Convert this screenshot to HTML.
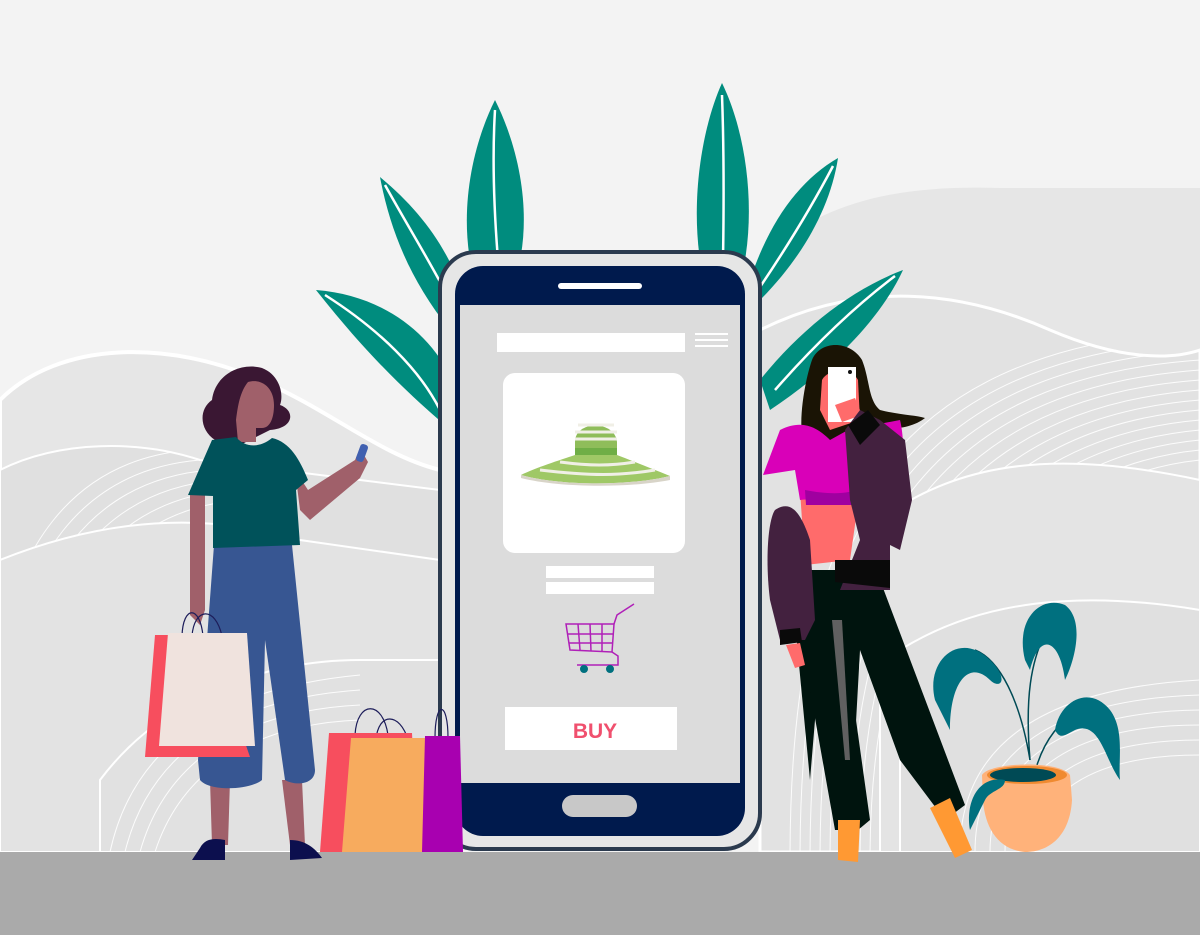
<!DOCTYPE html>
<html><head><meta charset="utf-8"><style>html,body{margin:0;padding:0;background:#f3f3f3}svg{display:block}</style></head>
<body>
<svg width="1200" height="935" viewBox="0 0 1200 935" xmlns="http://www.w3.org/2000/svg">
<defs>
<clipPath id="cr"><path d="M760 330 C860 280 960 290 1050 330 C1120 360 1170 360 1200 350 L1200 852 L760 852Z"/></clipPath>
<clipPath id="cl"><path d="M0 470 C60 440 140 440 200 460 L440 490 L440 852 L0 852Z"/></clipPath>
</defs>
<rect width="1200" height="935" fill="#f3f3f3"/>
<!-- background hills -->
<path d="M760 260 C820 200 900 185 1000 188 L1200 188 L1200 852 L760 852Z" fill="#e6e6e6"/>
<path d="M760 330 C860 280 960 290 1050 330 C1120 360 1170 360 1200 350 L1200 852 L760 852Z" fill="#e2e2e2" stroke="#fff" stroke-width="3"/>
<g clip-path="url(#cr)" fill="none" stroke="#fff" stroke-width="1" opacity="0.9">
<path d="M860 860 C860 600 950 420 1200 400"/><path d="M870 860 C870 610 960 430 1200 410"/><path d="M880 860 C880 620 970 440 1200 420"/><path d="M890 860 C890 630 980 450 1200 430"/><path d="M900 860 C900 640 990 460 1200 440"/><path d="M910 860 C910 650 1000 470 1200 450"/><path d="M920 860 C920 660 1010 480 1200 460"/><path d="M850 860 C850 590 940 410 1200 390"/><path d="M840 860 C840 580 930 400 1200 380"/><path d="M830 860 C830 570 920 390 1200 370"/><path d="M820 860 C820 560 910 380 1200 360"/><path d="M810 860 C810 550 900 370 1200 350"/><path d="M800 860 C800 540 890 360 1200 340"/><path d="M790 860 C790 530 880 350 1200 330"/>
</g>
<path d="M880 520 C960 460 1060 450 1200 480 L1200 852 L880 852Z" fill="#e4e4e4" stroke="#fff" stroke-width="2"/>
<path d="M900 650 C980 600 1080 590 1200 610 L1200 852 L900 852Z" fill="#e0e0e0" stroke="#fff" stroke-width="2"/>
<g fill="none" stroke="#fff" stroke-width="1" opacity="0.9">
<path d="M960 852 C960 760 1020 690 1200 680"/><path d="M975 852 C975 770 1030 700 1200 695"/><path d="M990 852 C990 780 1040 712 1200 710"/><path d="M1005 852 C1005 790 1050 725 1200 725"/><path d="M1020 852 C1020 800 1060 740 1200 740"/><path d="M1035 852 C1035 810 1070 755 1200 755"/>
</g>
<path d="M0 400 C60 340 170 340 260 380 C330 410 380 455 440 470 L440 852 L0 852Z" fill="#e6e6e6" stroke="#fff" stroke-width="4"/>
<path d="M0 470 C60 440 140 440 200 460 L440 490 L440 852 L0 852Z" fill="#e0e0e0" stroke="#fff" stroke-width="2"/>
<g clip-path="url(#cl)" fill="none" stroke="#fff" stroke-width="1" opacity="0.9">
<path d="M0 700 C20 560 80 470 200 460"/><path d="M10 710 C30 570 90 480 210 470"/><path d="M20 720 C40 580 100 490 220 480"/><path d="M30 730 C50 590 110 500 230 490"/><path d="M-10 690 C10 550 70 460 190 450"/><path d="M40 740 C60 600 120 510 240 500"/>
</g>
<path d="M0 560 C100 520 200 510 300 540 L440 560 L440 852 L0 852Z" fill="#e3e3e3" stroke="#fff" stroke-width="2"/>
<path d="M100 780 C160 700 260 660 360 660 L440 660 L440 852 L100 852Z" fill="#e1e1e1" stroke="#fff" stroke-width="2"/>
<g fill="none" stroke="#fff" stroke-width="1" opacity="0.9">
<path d="M110 852 C130 760 200 690 360 675"/><path d="M125 852 C145 770 210 700 360 690"/><path d="M140 852 C160 780 220 712 360 705"/><path d="M155 852 C175 790 230 725 360 720"/>
</g>
<rect x="0" y="852" width="1200" height="83" fill="#aaaaaa"/>
<!-- leaves -->
<g fill="#008c7e">
<path d="M445 425 C380 370 340 320 316 290 C380 295 430 330 455 385Z"/>
<path d="M450 330 C410 280 390 230 380 177 C420 210 450 250 465 300Z"/>
<path d="M470 260 C460 200 475 140 495 100 C520 150 530 210 520 260Z"/>
<path d="M700 260 C690 190 705 120 722 83 C745 130 755 200 745 260Z"/>
<path d="M750 280 C770 220 800 180 838 158 C830 210 800 260 760 300Z"/>
<path d="M760 380 C800 330 850 290 903 270 C880 320 830 370 770 410Z"/>
</g>
<g stroke="#fff" stroke-width="2.5" fill="none">
<path d="M325 295 C380 330 420 370 440 410"/><path d="M385 185 C410 230 435 270 455 310"/><path d="M495 110 C492 160 494 210 498 260"/>
<path d="M722 95 C724 150 724 200 723 260"/><path d="M833 166 C810 210 785 250 758 290"/><path d="M895 276 C850 310 810 350 775 390"/>
</g>
<!-- phone -->
<rect x="440" y="252" width="320" height="597" rx="36" fill="#e6e6e6" stroke="#2b3a4e" stroke-width="4"/>
<rect x="455" y="266" width="290" height="570" rx="28" fill="#001a4d"/>
<rect x="460" y="305" width="280" height="478" fill="#dcdcdc"/>
<rect x="558" y="283" width="84" height="6" rx="3" fill="#fff"/>
<rect x="562" y="795" width="75" height="22" rx="11" fill="#c8c8c8"/>
<rect x="497" y="333" width="188" height="19" fill="#fff"/>
<g fill="#fff"><rect x="695" y="333" width="33" height="2"/><rect x="695" y="339" width="33" height="2"/><rect x="695" y="345" width="33" height="2"/></g>
<rect x="503" y="373" width="182" height="180" rx="12" fill="#fff"/>
<!-- hat -->
<path d="M575 442 C575 420 615 420 617 442 L617 458 L575 458Z" fill="#8fbd5a"/>
<g stroke="#f0efe6" stroke-width="3"><line x1="578" y1="425" x2="614" y2="425"/><line x1="575" y1="432" x2="617" y2="432"/><line x1="575" y1="439" x2="617" y2="439"/></g>
<path d="M575 448 L617 448 L617 458 L575 458Z" fill="#6fae46"/>
<path d="M575 455 C560 460 535 468 521 475 C560 486 630 486 670 476 C650 468 630 460 617 455Z" fill="#9fc866"/>
<g stroke="#f0efe6" stroke-width="3" fill="none"><path d="M560 462 C590 466 610 466 635 462"/><path d="M540 470 C590 476 620 476 655 470"/></g>
<path d="M521 475 C560 486 630 486 670 476 L670 480 C630 488 560 488 521 478Z" fill="#d8d4c8"/>
<rect x="546" y="566" width="108" height="12" fill="#fff"/>
<rect x="546" y="582" width="108" height="12" fill="#fff"/>
<!-- cart -->
<g stroke="#b020b8" stroke-width="1.5" fill="none">
<path d="M566 624 L614 624 L612 652 L570 650Z"/>
<path d="M614 624 L617 615 L634 604"/>
<path d="M568 634 L613 634 M569 643 L612 643 M578 624 L580 650 M590 624 L591 651 M602 624 L602 652"/>
<path d="M612 652 L618 656 L618 665 L577 665"/>
</g>
<circle cx="584" cy="669" r="4" fill="#00707f"/><circle cx="610" cy="669" r="4" fill="#00707f"/>
<rect x="505" y="707" width="172" height="43" fill="#fff"/>
<text x="595" y="738" text-anchor="middle" font-family="Liberation Sans, sans-serif" font-size="21" font-weight="bold" fill="#f0506e">BUY</text>
<!-- floor bags -->
<g fill="none" stroke="#1d1d5a" stroke-width="1.2"><path d="M355 735 C357 700 383 700 388 735"/><path d="M376 740 C378 712 400 712 408 740"/><path d="M435 738 C435 700 448 700 448 738"/></g>
<path d="M329 733 L412 733 L418 852 L320 852Z" fill="#f74e5e"/>
<path d="M351 738 L426 738 L424 852 L342 852Z" fill="#f7ab5e"/>
<path d="M425 736 L460 736 L463 852 L422 852Z" fill="#a800b0"/>
<!-- left woman -->
<path d="M210 780 L230 780 L228 845 L212 845Z" fill="#a0606a"/>
<path d="M282 780 L302 780 L305 845 L290 845Z" fill="#a0606a"/>
<path d="M200 848 C205 838 215 838 225 840 L225 860 L192 860Z" fill="#0c0f4e"/>
<path d="M290 840 C305 840 315 848 322 858 L290 860Z" fill="#0c0f4e"/>
<path d="M214 545 L292 545 L315 770 C315 785 295 786 285 780 L265 640 L262 780 C250 790 210 792 200 780 L198 760Z" fill="#375692"/>
<path d="M215 440 C200 430 198 410 212 400 C215 375 240 362 262 368 C280 375 284 395 280 405 C295 410 295 428 270 430 L240 445 Z" fill="#3a1733"/>
<path d="M248 382 C262 378 274 388 274 405 C274 418 270 428 262 428 L256 428 L256 442 L238 442 L236 420 C238 405 240 392 248 382Z" fill="#a0606a"/>
<path d="M190 490 L205 490 L205 610 L200 625 L190 615Z" fill="#a0606a"/>
<path d="M295 470 L308 490 L355 460 L360 448 L368 462 L360 478 L310 520 L300 510Z" fill="#a0606a"/>
<rect x="358" y="444" width="8" height="18" rx="3" fill="#4060b0" transform="rotate(20 362 453)"/>
<path d="M212 440 L236 437 C245 448 260 448 272 438 C290 442 300 460 308 480 L296 490 L300 545 L213 548 L213 496 L188 495 Z" fill="#00525a"/>
<g fill="none" stroke="#1d1d5a" stroke-width="1.2"><path d="M182 636 C183 605 200 605 203 636"/><path d="M192 636 C194 608 215 605 222 636"/></g>
<path d="M155 635 L208 635 L250 757 L145 757Z" fill="#f74e5e"/>
<path d="M168 633 L247 633 L255 746 L159 746Z" fill="#f0e3de"/>
<!-- right woman -->
<path d="M812 360 C820 340 850 340 862 360 C870 380 868 400 880 410 C900 415 915 415 925 418 C910 430 885 430 868 428 L815 445 L803 440 C798 420 805 380 812 360Z" fill="#1a1405"/>
<path d="M822 380 C828 368 852 368 858 380 L860 420 L830 430 L820 410Z" fill="#ff6b6b"/>
<rect x="828" y="367" width="28" height="55" fill="#fff"/>
<circle cx="850" cy="372" r="2" fill="#111"/>
<path d="M835 405 L855 398 L862 415 L842 422Z" fill="#ff6b6b"/>
<path d="M790 570 L835 570 L870 820 L858 830 L838 830 L820 660 L810 780 Z" fill="#00140e"/>
<path d="M800 580 L880 580 L965 805 L945 820 L900 760 L860 650 L850 830 L835 830 L810 690Z" fill="#00140e"/>
<path d="M832 620 L842 620 L850 760 L845 760Z" fill="#606060"/>
<path d="M800 490 L860 490 L850 560 L805 565Z" fill="#ff6b6b"/>
<path d="M780 430 C800 420 815 425 830 440 L848 430 L900 420 C905 440 905 480 895 500 L850 505 C830 500 815 498 800 500 L795 470 L763 475 Z" fill="#d900b8"/>
<path d="M805 490 C830 495 850 494 860 488 L855 505 L806 505Z" fill="#a000a0"/>
<path d="M845 430 L860 410 L880 420 L905 440 L912 500 L900 550 L890 545 L890 590 L840 590 L860 540 L850 500Z" fill="#43213f"/>
<path d="M835 560 L890 560 L890 588 L835 582Z" fill="#0a0a0a"/>
<path d="M848 425 L868 410 L880 425 L860 445Z" fill="#0a0a0a"/>
<path d="M775 510 C790 500 800 510 810 540 L815 620 L805 640 L780 640 L770 600 C765 560 768 520 775 510Z" fill="#43213f"/>
<path d="M780 630 L800 628 L802 642 L780 645Z" fill="#0a0a0a"/>
<path d="M786 645 L800 643 L805 665 L795 668Z" fill="#ff6b6b"/>
<path d="M838 820 L860 820 L858 862 L838 860Z" fill="#ff9933"/>
<path d="M930 808 L950 798 L972 850 L955 858Z" fill="#ff9933"/>
<!-- plant -->
<g fill="none" stroke="#004a55" stroke-width="1.5"><path d="M1030 760 C1020 700 1000 660 975 650"/><path d="M1030 760 C1025 700 1030 660 1048 628"/><path d="M1037 765 C1045 740 1060 720 1080 710"/></g>
<path d="M935 700 C925 660 960 630 990 660 C1010 680 1000 690 990 680 C970 660 950 680 950 730Z" fill="#00707f"/>
<path d="M1025 660 C1015 620 1040 595 1065 605 C1085 620 1075 660 1065 680 C1060 640 1040 630 1030 670Z" fill="#00707f"/>
<path d="M1055 730 C1060 700 1090 685 1110 710 C1125 730 1118 760 1120 780 C1105 760 1100 720 1075 730 C1065 735 1060 740 1055 730Z" fill="#00707f"/>
<path d="M982 775 C990 762 1060 760 1070 775 L1072 800 C1070 835 1050 852 1025 852 C1000 850 985 830 983 800Z" fill="#ffb27a"/>
<ellipse cx="1027" cy="775" rx="40" ry="9" fill="#f08a30"/>
<ellipse cx="1023" cy="775" rx="33" ry="7" fill="#004a55"/>
<path d="M970 830 C965 800 980 775 1005 780 C1005 790 990 790 985 800 C980 810 975 820 970 830Z" fill="#00707f"/>
</svg>
</body></html>
